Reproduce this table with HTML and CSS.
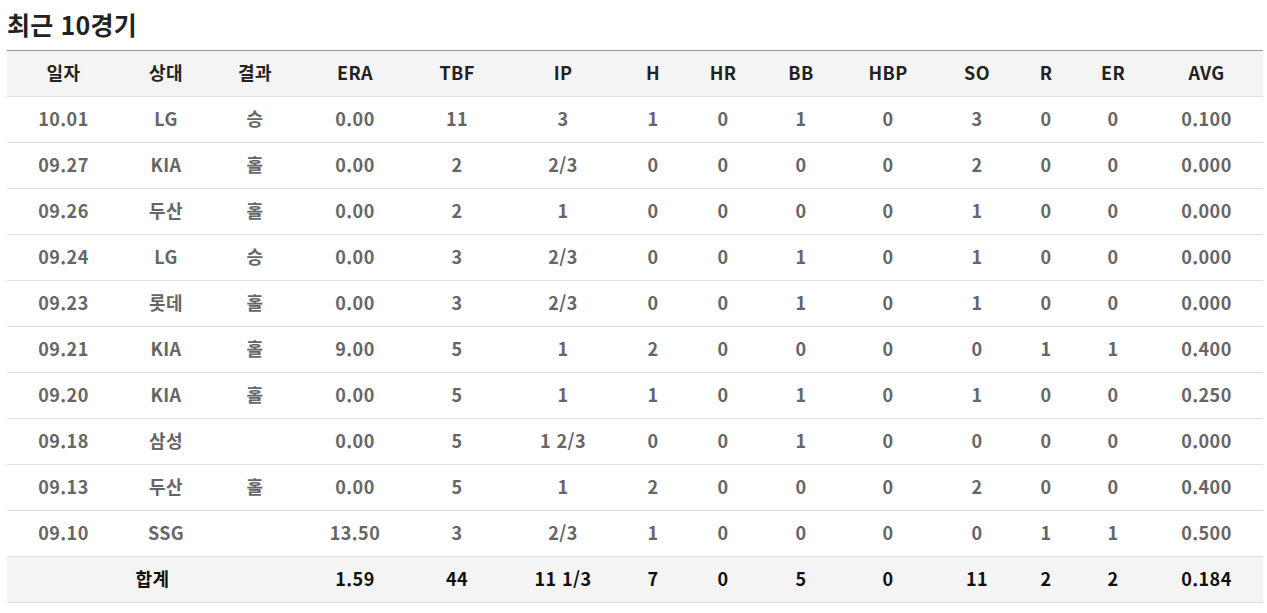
FILE: index.html
```html
<!DOCTYPE html>
<html lang="ko">
<head>
<meta charset="utf-8">
<link rel="stylesheet" href="styles.css">
</head>
<body>
<section class="recent">
  <h2 class="title">최근 10경기</h2>
  <table class="stats">
    <colgroup>
      <col class="c1"><col class="c2"><col class="c3"><col class="c4"><col class="c5"><col class="c6"><col class="c7">
      <col class="c8"><col class="c9"><col class="c10"><col class="c11"><col class="c12"><col class="c13"><col class="c14">
    </colgroup>
    <thead>
      <tr><th>일자</th><th>상대</th><th>결과</th><th>ERA</th><th>TBF</th><th>IP</th><th>H</th><th>HR</th><th>BB</th><th>HBP</th><th>SO</th><th>R</th><th>ER</th><th>AVG</th></tr>
    </thead>
    <tbody>
      <tr><td>10.01</td><td>LG</td><td>승</td><td>0.00</td><td>11</td><td>3</td><td>1</td><td>0</td><td>1</td><td>0</td><td>3</td><td>0</td><td>0</td><td>0.100</td></tr>
      <tr><td>09.27</td><td>KIA</td><td>홀</td><td>0.00</td><td>2</td><td>2/3</td><td>0</td><td>0</td><td>0</td><td>0</td><td>2</td><td>0</td><td>0</td><td>0.000</td></tr>
      <tr><td>09.26</td><td>두산</td><td>홀</td><td>0.00</td><td>2</td><td>1</td><td>0</td><td>0</td><td>0</td><td>0</td><td>1</td><td>0</td><td>0</td><td>0.000</td></tr>
      <tr><td>09.24</td><td>LG</td><td>승</td><td>0.00</td><td>3</td><td>2/3</td><td>0</td><td>0</td><td>1</td><td>0</td><td>1</td><td>0</td><td>0</td><td>0.000</td></tr>
      <tr><td>09.23</td><td>롯데</td><td>홀</td><td>0.00</td><td>3</td><td>2/3</td><td>0</td><td>0</td><td>1</td><td>0</td><td>1</td><td>0</td><td>0</td><td>0.000</td></tr>
      <tr><td>09.21</td><td>KIA</td><td>홀</td><td>9.00</td><td>5</td><td>1</td><td>2</td><td>0</td><td>0</td><td>0</td><td>0</td><td>1</td><td>1</td><td>0.400</td></tr>
      <tr><td>09.20</td><td>KIA</td><td>홀</td><td>0.00</td><td>5</td><td>1</td><td>1</td><td>0</td><td>1</td><td>0</td><td>1</td><td>0</td><td>0</td><td>0.250</td></tr>
      <tr><td>09.18</td><td>삼성</td><td></td><td>0.00</td><td>5</td><td>1 2/3</td><td>0</td><td>0</td><td>1</td><td>0</td><td>0</td><td>0</td><td>0</td><td>0.000</td></tr>
      <tr><td>09.13</td><td>두산</td><td>홀</td><td>0.00</td><td>5</td><td>1</td><td>2</td><td>0</td><td>0</td><td>0</td><td>2</td><td>0</td><td>0</td><td>0.400</td></tr>
      <tr><td>09.10</td><td>SSG</td><td></td><td>13.50</td><td>3</td><td>2/3</td><td>1</td><td>0</td><td>0</td><td>0</td><td>0</td><td>1</td><td>1</td><td>0.500</td></tr>
    </tbody>
    <tfoot>
      <tr><td colspan="3">합계</td><td>1.59</td><td>44</td><td>11 1/3</td><td>7</td><td>0</td><td>5</td><td>0</td><td>11</td><td>2</td><td>2</td><td>0.184</td></tr>
    </tfoot>
  </table>
</section>
</body>
</html>
```

FILE: styles.css
```css
html, body {
  margin: 0;
  padding: 0;
  background: #fff;
}
body {
  font-family: "Noto Sans CJK KR", "Noto Sans", sans-serif;
}
.recent {
  padding: 0 4px 0 7px;
}
.title {
  margin: 0;
  height: 50px;
  box-sizing: border-box;
  padding-top: 7px;
  font-size: 25px;
  line-height: 34px;
  font-weight: 700;
  color: #222;
  letter-spacing: 0.2px;
}
.stats {
  width: 1256px;
  border-collapse: collapse;
  table-layout: fixed;
  border-top: 1px solid #999;
}
.c1 { width: 113px; }
.c2 { width: 92px; }
.c3 { width: 86px; }
.c4 { width: 114px; }
.c5 { width: 90px; }
.c6 { width: 122px; }
.c7 { width: 58px; }
.c8 { width: 82px; }
.c9 { width: 74px; }
.c10 { width: 100px; }
.c11 { width: 78px; }
.c12 { width: 60px; }
.c13 { width: 74px; }
.c14 { width: 113px; }
.stats th,
.stats td {
  height: 46px;
  padding: 0 0 3px;
  box-sizing: border-box;
  text-align: center;
  vertical-align: middle;
  font-size: 18px;
  line-height: 22px;
  font-weight: 700;
  letter-spacing: 0.4px;
  border-bottom: 1px solid #ddd;
}
.stats thead th {
  background: #f4f4f4;
  color: #222;
}
.stats tbody td {
  color: #666;
}
.stats tfoot td {
  background: #f4f4f4;
  color: #111;
}
```
